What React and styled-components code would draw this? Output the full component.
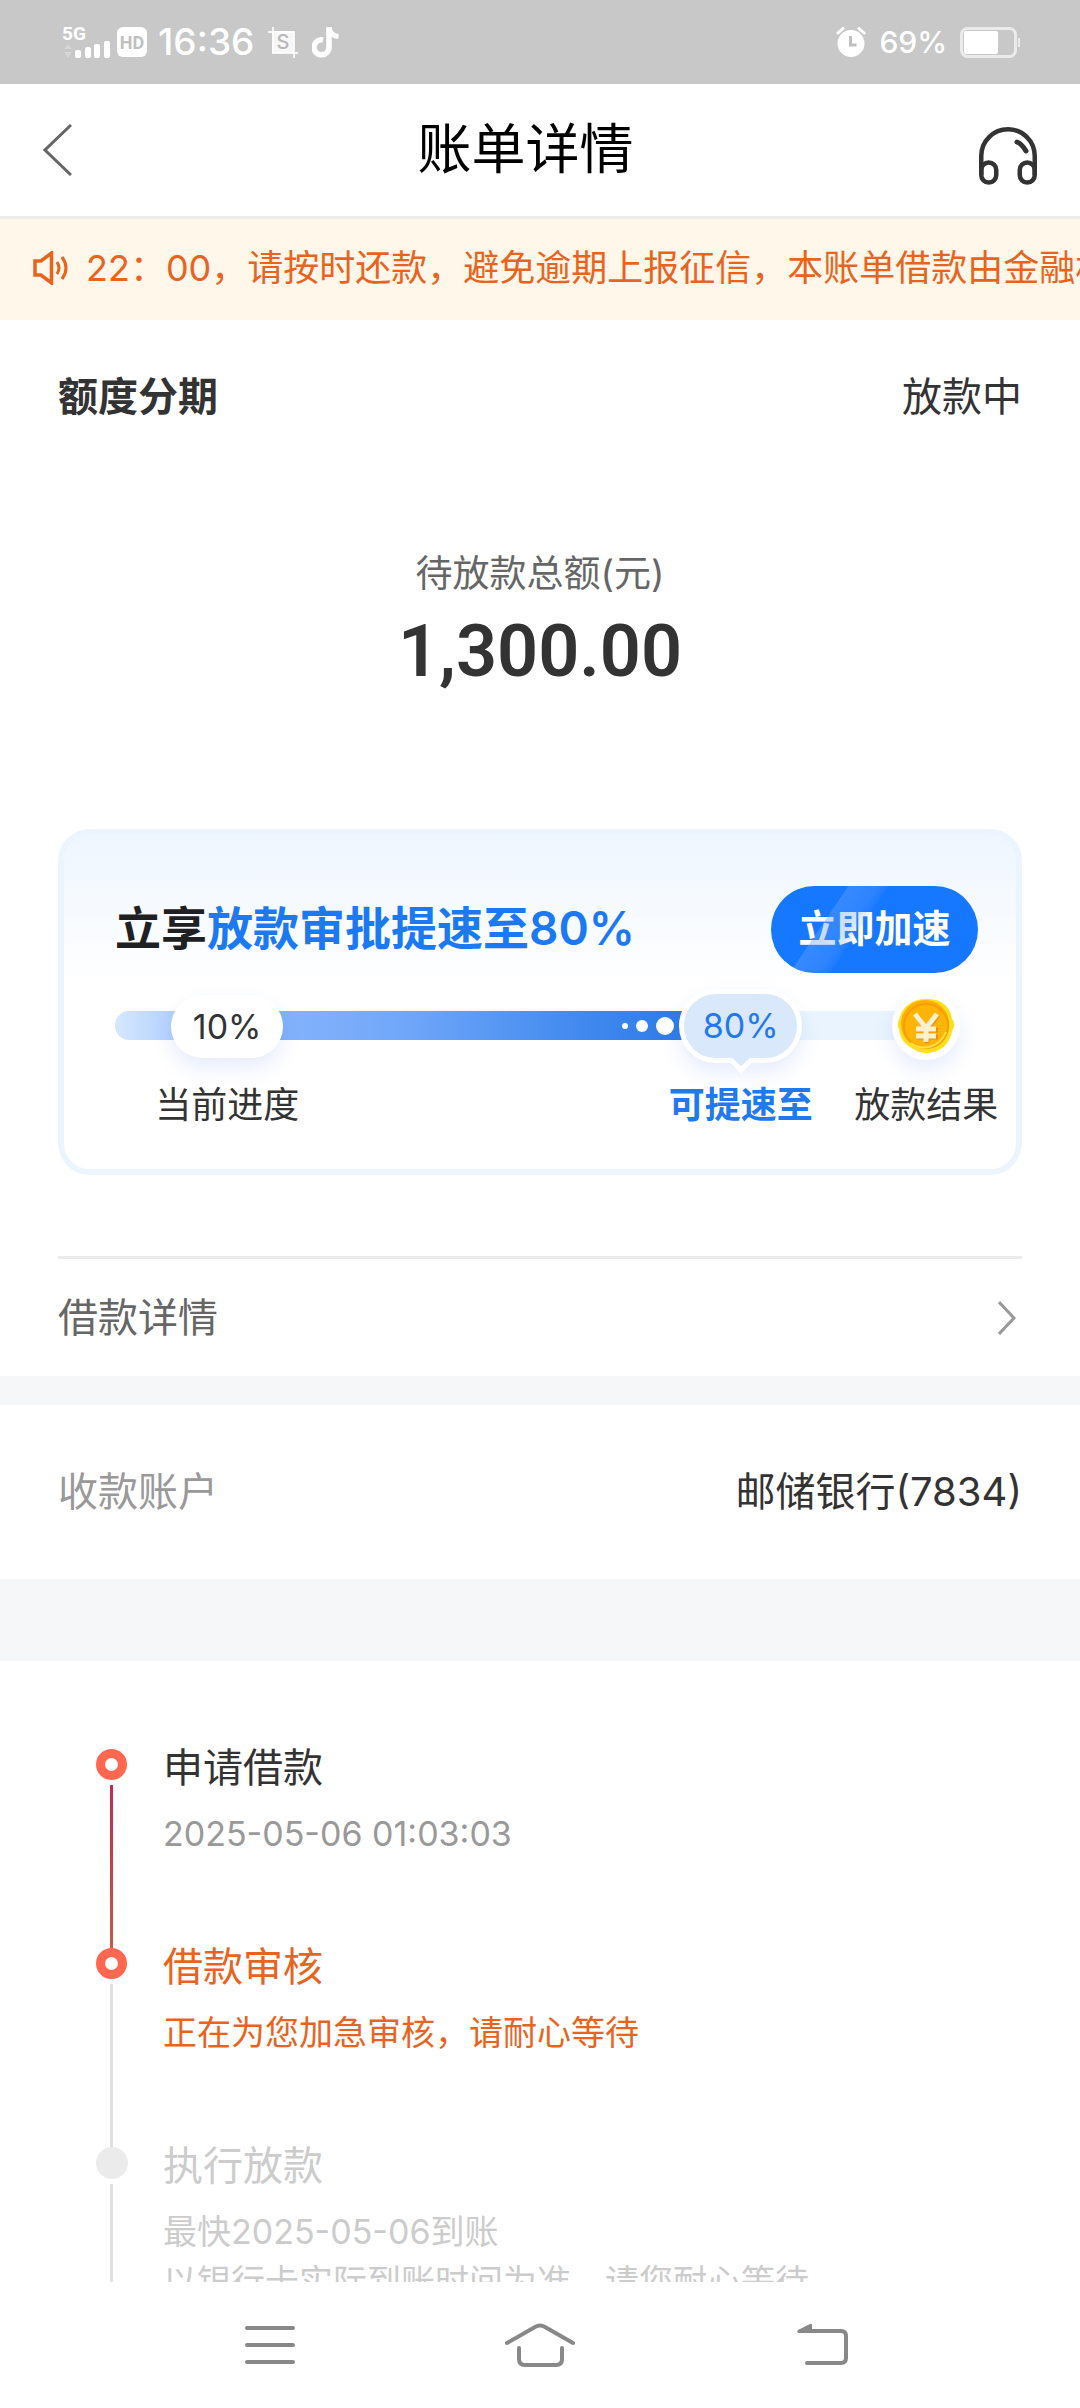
import React from 'react';
import styled, {createGlobalStyle, css} from "styled-components";

const colors = {
   text: '#333333',
   secondary: '#666666',
   muted: '#999999',
   disabled: '#cccccc',
   orange: '#e8641e',
   blue: '#1677ff',
   band: '#f6f7f9',
};

const GlobalStyle = createGlobalStyle`
   * {
      box-sizing: border-box;
   }
   body {
      margin: 0;
      background: #ffffff;
      color: ${colors.text};
      font-family: Inter, "Noto Sans CJK SC", sans-serif;
      font-size: 40px;
      line-height: 50px;
   }
   h1, h2, p, ol, dl, dd {
      margin: 0;
      padding: 0;
      font-weight: 400;
   }
   button {
      border: 0;
      padding: 0;
      background: none;
      color: inherit;
      font: inherit;
      cursor: pointer;
   }
   svg {
      display: block;
      flex: none;
   }
`;

const Screen = styled.div`
   display: flex;
   flex-direction: column;
   height: 100vh;
`;

const StatusBar = styled.div`
   display: flex;
   flex: none;
   align-items: center;
   justify-content: space-between;
   height: 84px;
   padding: 0 60px 0 62px;
   background: #c8c8c8;
   color: #ffffff;
`;

const StatusGroup = styled.div`
   display: flex;
   align-items: center;
   gap: ${({$gap}) => $gap}px;
`;

const StatusText = styled.span`
   font-size: ${({$size}) => $size}px;
   font-weight: 500;
   line-height: 40px;
`;

const Header = styled.header`
   display: flex;
   flex: none;
   align-items: center;
   height: 135px;
   padding: 0 43px;
   border-bottom: 3px solid #eeecea;
`;

const PageTitle = styled.h1`
   flex: 1;
   color: #000000;
   font-size: 54px;
   line-height: 64px;
   text-align: center;
`;

const Content = styled.main`
   flex: 1;
   min-height: 0;
   overflow: hidden;
`;

const Notice = styled.div`
   display: flex;
   align-items: center;
   gap: 17px;
   height: 101px;
   padding: 0 0 4px 33px;
   overflow: hidden;
   background: #fef7ea;
   color: ${colors.orange};
   font-size: 36px;
   white-space: nowrap;
`;

const Section = styled.section`
   padding: 0 58px;
`;

const SummaryRow = styled.div`
   display: flex;
   justify-content: space-between;
   padding-top: 52px;
`;

const PlanName = styled.h2`
   font-size: 40px;
   font-weight: 700;
`;

const Amount = styled.div`
   padding: 127px 0 128px;
   text-align: center;
`;

const AmountLabel = styled.p`
   color: ${colors.secondary};
   font-size: 37px;
`;

const AmountValue = styled.p`
   margin-top: 4px;
   font-family: Roboto, sans-serif;
   font-size: 72px;
   font-weight: 600;
   line-height: 98px;
`;

const BoostCard = styled.div`
   padding: 51px 38px 39px 51px;
   border: 6px solid #ecf5fe;
   border-radius: 32px;
   background: linear-gradient(#eef6ff, #ffffff 150px);
`;

const BoostHead = styled.div`
   display: flex;
   align-items: center;
   justify-content: space-between;
`;

const BoostTitle = styled.h2`
   padding-bottom: 4px;
   color: #1f2022;
   font-size: 46px;
   font-weight: 600;
   white-space: nowrap;
`;

const Highlight = styled.span`
   color: #1b7af3;
`;

const BoostButton = styled.button`
   position: relative;
   flex: none;
   overflow: hidden;
   width: 207px;
   height: 87px;
   padding-bottom: 4px;
   border-radius: 44px;
   background: ${colors.blue};
   color: #ffffff;
   font-size: 38px;
   font-weight: 700;

   &::after {
      content: "";
      position: absolute;
      top: 0;
      bottom: 0;
      left: 48px;
      width: 40px;
      background: linear-gradient(90deg, rgba(103, 163, 255, 0.4), rgba(103, 163, 255, 0.3) 70%, rgba(103, 163, 255, 0.1));
      transform: skewX(-34deg);
   }
`;

const Rail = styled.div`
   position: relative;
   height: 141px;
   margin-top: 16px;
   padding-top: 22px;
`;

const RailTrack = styled.div`
   width: 94%;
   height: 29px;
   border-radius: 15px;
   background: #eaf4fe;
`;

const RailFill = styled.div`
   display: flex;
   align-items: center;
   justify-content: flex-end;
   gap: 8px;
   width: 77%;
   height: 100%;
   padding-right: 66px;
   border-radius: 15px 0 0 15px;
   background: linear-gradient(90deg, #d6e8ff, #8ab6fb 20%, #72a8fa 45%, #3f88ee 76%, #2373e2);
`;

const RailDot = styled.span`
   width: ${({$size}) => $size}px;
   height: ${({$size}) => $size}px;
   border-radius: 50%;
   background: #ffffff;
`;

// markers sit on top of the track, centred on their share of its width
const Marker = styled.div`
   position: absolute;
   top: 0;
   left: ${({$at}) => $at}%;
   display: flex;
   flex-direction: column;
   align-items: center;
   gap: 17px;
   transform: translateX(-50%);
   font-size: 36px;
   white-space: nowrap;
`;

const MarkerSlot = styled.div`
   display: flex;
   align-items: center;
   height: 74px;
`;

const MarkerLabel = styled.span`
   ${({$active}) => $active && css`
      color: #2079ee;
      font-weight: 700;
   `}
`;

const Pill = styled.span`
   width: 112px;
   height: 63px;
   border-radius: 32px;
   background: #ffffff;
   box-shadow: 0 10px 20px rgba(60, 110, 240, 0.12);
   font-size: 34px;
   line-height: 63px;
   text-align: center;
`;

const Bubble = styled(Pill)`
   position: relative;
   width: 123px;
   height: 74px;
   border: 5px solid #ffffff;
   border-radius: 37px;
   background: #dae8fc;
   color: #2079ee;

   &::after {
      content: "";
      position: absolute;
      top: 58px;
      left: 50%;
      box-sizing: content-box;
      width: 12px;
      height: 12px;
      margin-left: -6px;
      border: solid #ffffff;
      border-width: 0 5px 5px 0;
      background: #dae8fc;
      transform: rotate(45deg);
      transform-origin: 6px 6px;
   }
`;

const CoinHolder = styled.span`
   display: flex;
   align-items: center;
   justify-content: center;
   width: 68px;
   height: 68px;
   border-radius: 50%;
   background: #ffffff;
   box-shadow: 0 10px 20px rgba(60, 110, 240, 0.12);
`;

const DetailLink = styled.button`
   display: flex;
   align-items: center;
   justify-content: space-between;
   width: 100%;
   height: 120px;
   margin-top: 81px;
   padding-right: 6px;
   border-top: 3px solid #ebebeb;
   color: ${colors.secondary};
`;

const Band = styled.div`
   height: ${({$height}) => $height}px;
   background: ${colors.band};
`;

const AccountRow = styled.dl`
   display: flex;
   align-items: center;
   justify-content: space-between;
   height: 174px;
   padding: 0 58px;
`;

const AccountLabel = styled.dt`
   color: ${colors.muted};
`;

const AccountValue = styled.dd`
   color: ${colors.text};
`;

const Timeline = styled.ol`
   padding: 82px 58px 0 96px;
   list-style: none;
`;

const TimelineItem = styled.li`
   display: flex;
   gap: 36px;
   min-height: 199px;
`;

const Track = styled.div`
   display: flex;
   flex: none;
   flex-direction: column;
   align-items: center;
   gap: 5px;
   width: 31px;
   margin: 6px 0 -6px;
`;

const Dot = styled.span`
   width: 31px;
   height: 31px;
   border: ${({$reached}) => $reached ? '9px solid #ff6750' : '16px solid #ebebeb'};
   border-radius: 50%;
`;

const Line = styled.span`
   flex: 1;
   width: 3px;
   background: ${({$passed}) => $passed ? 'linear-gradient(#c8284c, #d2553f)' : '#e0e0e0'};
`;

const StepTitle = styled.p`
   margin-bottom: 16px;
   color: ${({$color}) => $color};
`;

const StepText = styled.p`
   color: ${({$color}) => $color};
   font-size: 34px;
   white-space: nowrap;
`;

const SystemNav = styled.nav`
   display: grid;
   flex: none;
   grid-template-columns: 1fr auto 1fr;
   align-items: center;
   column-gap: 210px;
   height: 126px;
   background: #ffffff;
`;

const NavKey = styled.button`
   justify-self: ${({$align}) => $align};
`;

const SignalIcon = () => <svg width="48" height="36" viewBox="0 -2 48 36" fill="#fff">
   <text x="0" y="14" fontSize="19" fontWeight="700" fontFamily="Roboto, sans-serif">5G</text>
   <path d="M2 23l4-5 4 5zM2 26l4 6 4-6z" opacity="0.25" />
   <rect x="13" y="24" width="6" height="8" rx="2" />
   <rect x="23" y="21" width="6" height="11" rx="2" />
   <rect x="32" y="18" width="6" height="14" rx="2" />
   <rect x="42" y="15" width="6" height="17" rx="2" />
</svg>

const HdIcon = () => <svg width="30" height="30" viewBox="0 0 30 30">
   <rect width="30" height="30" rx="6" fill="#fff" />
   <text x="15" y="22" fontSize="18" fontWeight="700" fontFamily="Roboto, sans-serif" textAnchor="middle" fill="#c0c0c0">HD</text>
</svg>

const CropIcon = () => <svg width="30" height="31" viewBox="0 0 30 31">
   <path d="M5 0v26h25M0 5h26v26" fill="none" stroke="#fff" strokeWidth="2" opacity="0.8" />
   <rect x="4" y="4" width="22" height="22" fill="#fff" opacity="0.85" />
   <text x="15" y="22" fontSize="20" fontWeight="500" fontFamily="Inter, sans-serif" textAnchor="middle" fill="#b8b8b8">S</text>
</svg>

const TikTokIcon = () => <svg width="28" height="32" viewBox="0 0 28 32" fill="none" stroke="#fff">
   <path d="M11 14a7.500 7.500 0 1 0 6 7.500V1" strokeWidth="5.500" />
   <path d="M17 2c1 5 4 8 9.500 8.500" strokeWidth="5" />
</svg>

const AlarmIcon = () => <svg width="30" height="30" viewBox="0 0 30 30">
   <circle cx="15" cy="16.500" r="13.500" fill="#fff" />
   <path d="M2 6l5-4.500M28 6l-5-4.500" stroke="#fff" strokeWidth="3" strokeLinecap="round" />
   <path d="M14.500 9v9h6" fill="none" stroke="#c0c0c0" strokeWidth="3" />
</svg>

const BatteryIcon = () => <svg width="60" height="31" viewBox="0 0 60 31">
   <rect x="1.500" y="1.500" width="54" height="28" rx="6" fill="none" stroke="#ebebeb" strokeWidth="3" />
   <rect x="4" y="4" width="34" height="23" rx="2" fill="#fff" />
   <rect x="58" y="11" width="2" height="9" fill="#ebebeb" />
</svg>

const BackIcon = () => <svg width="29" height="52" viewBox="0 0 29 52">
   <path d="M28 1L2 26l26 25" fill="none" stroke="#666" strokeWidth="3" />
</svg>

const HeadsetIcon = () => <svg width="58" height="70" viewBox="0 -12 58 70" fill="none" stroke="#333" strokeWidth="4.500">
   <path d="M2.250 48V29a26.750 26.750 0 0 1 53.500 0v19" />
   <rect x="2.250" y="35.500" width="15" height="20" rx="7.500" />
   <rect x="40.750" y="35.500" width="15" height="20" rx="7.500" />
   <path d="M38 15q5 2 9 9" strokeWidth="5" strokeLinecap="round" />
</svg>

const SpeakerIcon = () => <svg width="36" height="34" viewBox="0 0 36 34" fill="none" stroke={colors.orange} strokeWidth="3.500">
   <path d="M2 10h6L18.500 2v30L8 24H2z" />
   <path d="M24 11q4 6 0 12M29 6q8 11 0 22" strokeWidth="3" />
</svg>

const ChevronIcon = () => <svg width="18" height="34" viewBox="0 0 18 34">
   <path d="M1 1l15 16L1 33" fill="none" stroke="#999" strokeWidth="3" />
</svg>

const CoinIcon = () => <svg width="58" height="56" viewBox="0 0 58 56">
   <path d="M29 1c16-1 25 9 26 20 4 5 2 9 0 12-2 13-12 22-26 22-7 0-11-3-16-6C4 43 3 37 2 31c-3-5 0-9 1-12C6 8 16 1 29 1z" fill="#ffdf1c" />
   <circle cx="28" cy="26" r="24" fill="#ffae08" />
   <circle cx="29" cy="28" r="22" fill="#ffb508" stroke="#f79d08" strokeWidth="2" />
   <path d="M14 45c12 9 29 4 35-11" fill="none" stroke="#ffe14a" strokeWidth="2" />
   <path d="M18 16l11 14 11-14M29 30v14M19 31h21M19 38h21" transform="translate(1 1)" fill="none" stroke="#f08c10" strokeWidth="5" />
   <path d="M18 16l11 14 11-14M29 30v14M19 31h20M19 38h20" fill="none" stroke="#fff0cf" strokeWidth="5" />
</svg>

const MenuKeyIcon = () => <svg width="50" height="44" viewBox="0 0 50 44">
   <path d="M2 5h46M2 22h46M2 39h46" stroke="#888" strokeWidth="4" strokeLinecap="round" />
</svg>

const HomeKeyIcon = () => <svg width="70" height="44" viewBox="0 0 70 44" fill="none" stroke="#888" strokeWidth="4" strokeLinecap="round">
   <path d="M2 20L30 4q5-3 10 0l28 16" />
   <path d="M14 25v11q0 6 6 6h31q6 0 6-6V25" />
</svg>

const BackKeyIcon = () => <svg width="63" height="44" viewBox="-12 0 63 44">
   <path d="M4 8h40q5 0 5 5v22q0 5-5 5H10" fill="none" stroke="#888" strokeWidth="4" strokeLinecap="round" />
   <path d="M1 7L13 1q2-1 2 1v8H2q-3-1-1-3z" fill="#888" />
</svg>

const steps = [
   {
      title: "申请借款",
      lines: ["2025-05-06 01:03:03"],
      title_color: colors.text,
      text_color: colors.muted,
      reached: true,
      passed: true,
   },
   {
      title: "借款审核",
      lines: ["正在为您加急审核，请耐心等待"],
      title_color: colors.orange,
      text_color: colors.orange,
      reached: true,
      passed: false,
   },
   {
      title: "执行放款",
      lines: ["最快2025-05-06到账", "以银行卡实际到账时间为准，请您耐心等待"],
      title_color: colors.disabled,
      text_color: colors.disabled,
      reached: false,
      passed: false,
   },
];

const render_step = (step) => {
   return <TimelineItem key={step.title}>
      <Track>
         <Dot $reached={step.reached} />
         <Line $passed={step.passed} />
      </Track>
      <div>
         <StepTitle $color={step.title_color}>{step.title}</StepTitle>
         {step.lines.map(line => <StepText key={line} $color={step.text_color}>{line}</StepText>)}
      </div>
   </TimelineItem>
}

const App = () => {
   return <Screen>
      <GlobalStyle />
      <StatusBar>
         <StatusGroup $gap={11}>
            <StatusGroup $gap={7}>
               <SignalIcon />
               <HdIcon />
            </StatusGroup>
            <StatusGroup $gap={14}>
               <StatusText $size={37}>16:36</StatusText>
               <CropIcon />
               <TikTokIcon />
            </StatusGroup>
         </StatusGroup>
         <StatusGroup $gap={13}>
            <AlarmIcon />
            <StatusText $size={30}>69%</StatusText>
            <BatteryIcon />
         </StatusGroup>
      </StatusBar>
      <Header>
         <button type="button" aria-label="返回"><BackIcon /></button>
         <PageTitle>账单详情</PageTitle>
         <button type="button" aria-label="客服"><HeadsetIcon /></button>
      </Header>
      <Content>
         <Notice>
            <SpeakerIcon />
            <span>22：00，请按时还款，避免逾期上报征信，本账单借款由金融机构</span>
         </Notice>
         <Section>
            <SummaryRow>
               <PlanName>额度分期</PlanName>
               <span>放款中</span>
            </SummaryRow>
            <Amount>
               <AmountLabel>待放款总额(元)</AmountLabel>
               <AmountValue>1,300.00</AmountValue>
            </Amount>
            <BoostCard>
               <BoostHead>
                  <BoostTitle>立享<Highlight>放款审批提速至80%</Highlight></BoostTitle>
                  <BoostButton type="button">立即加速</BoostButton>
               </BoostHead>
               <Rail>
                  <RailTrack>
                     <RailFill>
                        <RailDot $size={6} />
                        <RailDot $size={12} />
                        <RailDot $size={18} />
                     </RailFill>
                  </RailTrack>
                  <Marker $at={13}>
                     <MarkerSlot><Pill>10%</Pill></MarkerSlot>
                     <MarkerLabel>当前进度</MarkerLabel>
                  </Marker>
                  <Marker $at={72.5}>
                     <MarkerSlot><Bubble>80%</Bubble></MarkerSlot>
                     <MarkerLabel $active>可提速至</MarkerLabel>
                  </Marker>
                  <Marker $at={94}>
                     <MarkerSlot><CoinHolder><CoinIcon /></CoinHolder></MarkerSlot>
                     <MarkerLabel>放款结果</MarkerLabel>
                  </Marker>
               </Rail>
            </BoostCard>
            <DetailLink type="button">
               借款详情
               <ChevronIcon />
            </DetailLink>
         </Section>
         <Band $height={29} />
         <AccountRow>
            <AccountLabel>收款账户</AccountLabel>
            <AccountValue>邮储银行(7834)</AccountValue>
         </AccountRow>
         <Band $height={82} />
         <Timeline>
            {steps.map(render_step)}
         </Timeline>
      </Content>
      <SystemNav>
         <NavKey type="button" aria-label="最近任务" $align="end"><MenuKeyIcon /></NavKey>
         <NavKey type="button" aria-label="主屏幕" $align="center"><HomeKeyIcon /></NavKey>
         <NavKey type="button" aria-label="后退" $align="start"><BackKeyIcon /></NavKey>
      </SystemNav>
   </Screen>
}

export default App;
